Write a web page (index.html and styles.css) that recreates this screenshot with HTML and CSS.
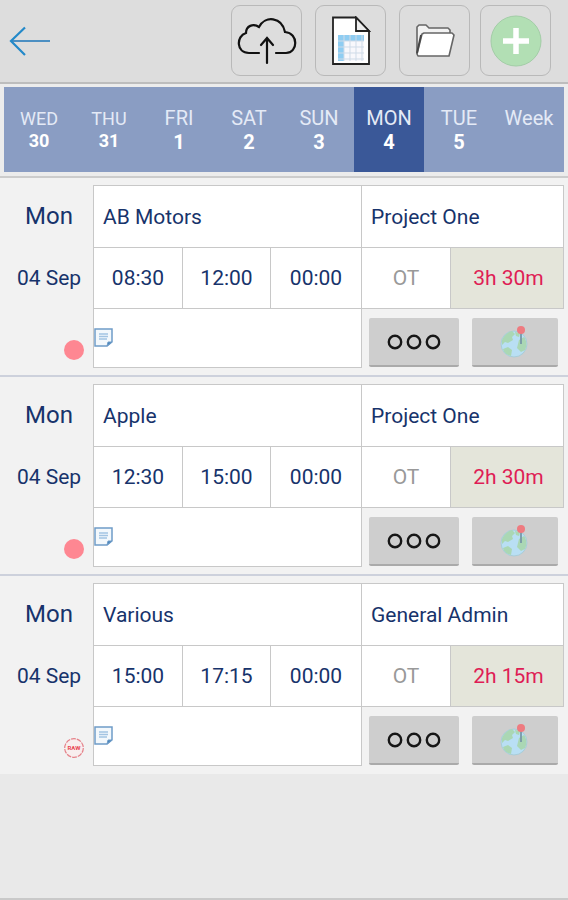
FILE: index.html
```html
<!DOCTYPE html>
<html lang="en">
<head>
<meta charset="utf-8">
<meta name="viewport" content="width=device-width, initial-scale=1">
<title>Timesheet</title>
<link rel="stylesheet" href="styles.css">
</head>
<body>
<svg class="sprite" aria-hidden="true">
  <symbol id="note" viewBox="0 0 20 20">
    <path d="M1 1H18V14L13 18H1Z" fill="#f3f8fc" stroke="#6f9cc8" stroke-width="1.5"/>
    <path d="M18 14H14L13 18Z" fill="#4583ba" stroke="#6f9cc8"/>
    <path d="M5 6H14M5 8.500H14M5 11H13" stroke="#a3c4e2" stroke-width="1.300"/>
  </symbol>
  <symbol id="dots" viewBox="0 0 54 16">
    <g fill="none" stroke="#161616" stroke-width="2.400"><circle cx="8" cy="8" r="6.200"/><circle cx="27" cy="8" r="6.200"/><circle cx="46" cy="8" r="6.200"/></g>
  </symbol>
  <symbol id="globe" viewBox="0 0 30 34">
    <circle cx="14" cy="19" r="13" fill="#b9dff4" stroke="#a9cdd8" stroke-width="1"/>
    <path d="M2 15C4 10 8 7 12 6L15 9L12 12L13 15L8 18L5 17L2 20Z" fill="#aad7b4"/>
    <path d="M3 24L8 22L12 25L11 31C7 30 4 28 3 24Z" fill="#aad7b4"/>
    <path d="M15 7L20 8L19 12L16 11Z" fill="#aad7b4"/>
    <path d="M19 15L24 12C27 16 27 21 25 25L21 27L17 23L18 19Z" fill="#aad7b4"/>
    <path d="M21 6V19" stroke="#7898a8" stroke-width="1.800"/>
    <circle cx="21" cy="5" r="4" fill="#ee7b80"/>
  </symbol>
</svg>

<header class="toolbar">
  <a class="back" href="#" aria-label="Back">
    <svg width="42" height="30" viewBox="0 0 42 30" fill="none" stroke-width="2.200"><path d="M2 15H41" stroke="#4c8fc2"/><path d="M16 1.500L2 15L16 29" stroke="#2389c9"/></svg>
  </a>
  <button class="tool" aria-label="Upload">
    <svg width="60" height="50" viewBox="0 0 60 50" fill="none" stroke="#111" stroke-width="2.200" stroke-linecap="round"><path d="M22 37H12C-1 37-1 20 9 17C9 10 16 7 22 11C28-1 45 1 48 16C62 17 61 37 49 37H39"/><path d="M30 47V23M24 29L30 22L36 29"/></svg>
  </button>
  <button class="tool" aria-label="Timesheet">
    <svg width="40" height="50" viewBox="0 0 40 50">
      <path d="M2 1.500H25L38 15V48H2Z" fill="#fff" stroke="#222" stroke-width="1.800"/>
      <path d="M25 1.500V15H38Z" fill="#eee" stroke="#222" stroke-width="1.800"/>
      <path d="M7 19H33V25H13V45H7Z" fill="#8fcdf2"/>
      <path d="M13 25H33V45H13Z" fill="#f8f8fc"/>
      <path d="M13 19V45M19 19V45M25 19V45M31 19V45M7 25H33M7 31H33M7 37H33M7 43H33" stroke="#cfdbe8" stroke-width="1" fill="none"/>
    </svg>
  </button>
  <button class="tool" aria-label="Projects">
    <svg width="40" height="34" viewBox="0 0 40 34" stroke="#666" stroke-width="1.600" stroke-linejoin="round">
      <path d="M2 30V3L4 1H11L14 4H33L35 6V12" fill="#f2f2f2"/>
      <path d="M7 10L9 9H37L39 11L34 32H3L2 30Z" fill="#fff"/>
      <path d="M2 29L6 11" stroke="#444" stroke-width="1.800"/>
    </svg>
  </button>
  <button class="tool" aria-label="Add entry">
    <svg width="54" height="54" viewBox="0 0 54 54"><circle cx="27" cy="27" r="25" fill="#b2dfb4" stroke="#a3cda7"/><path d="M27 14V40M14 27H40" stroke="#fff" stroke-width="5.500"/></svg>
  </button>
</header>

<nav class="days" aria-label="Days">
  <button class="day small">WED<b>30</b></button>
  <button class="day small">THU<b>31</b></button>
  <button class="day">FRI<b>1</b></button>
  <button class="day">SAT<b>2</b></button>
  <button class="day">SUN<b>3</b></button>
  <button class="day current" aria-current="date">MON<b>4</b></button>
  <button class="day">TUE<b>5</b></button>
  <button class="day">Week</button>
</nav>

<main>
  <article class="entry">
    <div class="date"><span class="weekday">Mon</span><span>04 Sep</span>
      <svg class="status" viewBox="0 0 20 20"><circle cx="10" cy="10" r="10" fill="#fe8792"/></svg></div>
    <div class="sheet">
      <button class="cell client">AB Motors</button>
      <button class="cell project">Project One</button>
      <button class="cell">08:30</button>
      <button class="cell">12:00</button>
      <button class="cell">00:00</button>
      <button class="cell overtime">OT</button>
      <output class="cell total">3h 30m</output>
      <button class="cell notes" aria-label="Notes"><svg width="20" height="20"><use href="#note"/></svg></button>
      <div class="actions">
        <button class="action" aria-label="More"><svg width="54" height="16"><use href="#dots"/></svg></button>
        <button class="action" aria-label="Location"><svg width="30" height="34"><use href="#globe"/></svg></button>
      </div>
    </div>
  </article>

  <article class="entry">
    <div class="date"><span class="weekday">Mon</span><span>04 Sep</span>
      <svg class="status" viewBox="0 0 20 20"><circle cx="10" cy="10" r="10" fill="#fe8792"/></svg></div>
    <div class="sheet">
      <button class="cell client">Apple</button>
      <button class="cell project">Project One</button>
      <button class="cell">12:30</button>
      <button class="cell">15:00</button>
      <button class="cell">00:00</button>
      <button class="cell overtime">OT</button>
      <output class="cell total">2h 30m</output>
      <button class="cell notes" aria-label="Notes"><svg width="20" height="20"><use href="#note"/></svg></button>
      <div class="actions">
        <button class="action" aria-label="More"><svg width="54" height="16"><use href="#dots"/></svg></button>
        <button class="action" aria-label="Location"><svg width="30" height="34"><use href="#globe"/></svg></button>
      </div>
    </div>
  </article>

  <article class="entry">
    <div class="date"><span class="weekday">Mon</span><span>04 Sep</span>
      <svg class="status" viewBox="0 0 20 20"><circle cx="10" cy="10" r="9.300" fill="#f8eeee" stroke="#e5828a" stroke-width="1.200" stroke-dasharray="4.800 1"/><text class="stamp" x="10" y="12" text-anchor="middle">RAW</text></svg></div>
    <div class="sheet">
      <button class="cell client">Various</button>
      <button class="cell project">General Admin</button>
      <button class="cell">15:00</button>
      <button class="cell">17:15</button>
      <button class="cell">00:00</button>
      <button class="cell overtime">OT</button>
      <output class="cell total">2h 15m</output>
      <button class="cell notes" aria-label="Notes"><svg width="20" height="20"><use href="#note"/></svg></button>
      <div class="actions">
        <button class="action" aria-label="More"><svg width="54" height="16"><use href="#dots"/></svg></button>
        <button class="action" aria-label="Location"><svg width="30" height="34"><use href="#globe"/></svg></button>
      </div>
    </div>
  </article>
</main>
</body>
</html>
```
FILE: styles.css
```css
* {
  box-sizing: border-box;
}

body {
  margin: 0;
  min-height: 100vh;
  background: #e9e9e9;
  border-bottom: 2px solid #c9c9c9;
  color: #17336b;
  font: 21px/26px Roboto, sans-serif;
}

button {
  margin: 0;
  padding: 0;
  border: 0;
  background: none;
  color: inherit;
  font: inherit;
  cursor: pointer;
}

svg {
  display: block;
}

.sprite {
  display: none;
}

.toolbar {
  display: flex;
  gap: 13px;
  padding: 5px 17px 6px 9px;
  background: #ddd;
  border-bottom: 2px solid #bdbdbd;
}

.back {
  display: flex;
  align-items: center;
  margin-right: auto;
}

.tool {
  display: flex;
  align-items: center;
  justify-content: center;
  width: 71px;
  height: 71px;
  border: 1px solid #b9b9b9;
  border-radius: 9px;
}

.tool:last-child {
  margin-left: -3px;
}

.days {
  display: flex;
  padding: 3px 4px 4px;
  background: #ececec;
  border-bottom: 2px solid #ccc;
}

.day {
  display: flex;
  flex: 1;
  flex-direction: column;
  align-items: center;
  height: 85px;
  padding-top: 19px;
  background: #8a9dc3;
  color: #e4eaf6;
  font-size: 20px;
  line-height: 24px;
}

.day b {
  color: #fff;
  font-size: 20px;
}

.small,
.small b {
  font-size: 18px;
}

.small {
  line-height: 22px;
  padding-top: 21px;
}

.current {
  background: #3a5898;
}

.entry {
  display: grid;
  grid-template-columns: 93px 1fr;
  padding: 7px 4px 7px 0;
  background: #f2f2f2;
  border-bottom: 2px solid #cdd1dc;
}

.entry:last-child {
  padding-bottom: 8px;
  border-bottom: 0;
}

.date {
  display: grid;
  grid-template-rows: 62px 62px 59px;
  place-items: center;
  padding-left: 5px;
}

.weekday {
  font-size: 24px;
}

.status {
  width: 20px;
  height: 20px;
  align-self: end;
  justify-self: end;
  margin: 0 9px 8px 0;
}

.stamp {
  fill: #e8454e;
  font-size: 6px;
  font-weight: 700;
}

.sheet {
  display: grid;
  grid-template-columns: 89fr 88fr 91fr 89fr 113fr;
  grid-template-rows: 62px 61px 59px;
  border: solid #c8c8c8;
  border-width: 1px 0 0 1px;
}

.cell {
  display: flex;
  align-items: center;
  justify-content: center;
  background: #fff;
  border: solid #c8c8c8;
  border-width: 0 1px 1px 0;
}

.client,
.project {
  justify-content: flex-start;
  padding-left: 9px;
}

.client,
.notes {
  grid-column: span 3;
}

.project,
.actions {
  grid-column: span 2;
}

.overtime {
  color: #999;
}

.total {
  padding-left: 3px;
  background: #e4e5da;
  color: #df1d55;
}

.notes {
  align-items: flex-start;
  justify-content: flex-start;
  padding-top: 19px;
}

.actions {
  display: grid;
  grid-template-columns: 90fr 86fr;
  gap: 13px;
  padding: 9px 6px 1px 7px;
}

.action {
  display: flex;
  align-items: center;
  justify-content: center;
  background: #cecece;
  border-bottom: 2px solid #aaa;
  border-radius: 2px;
}
```
